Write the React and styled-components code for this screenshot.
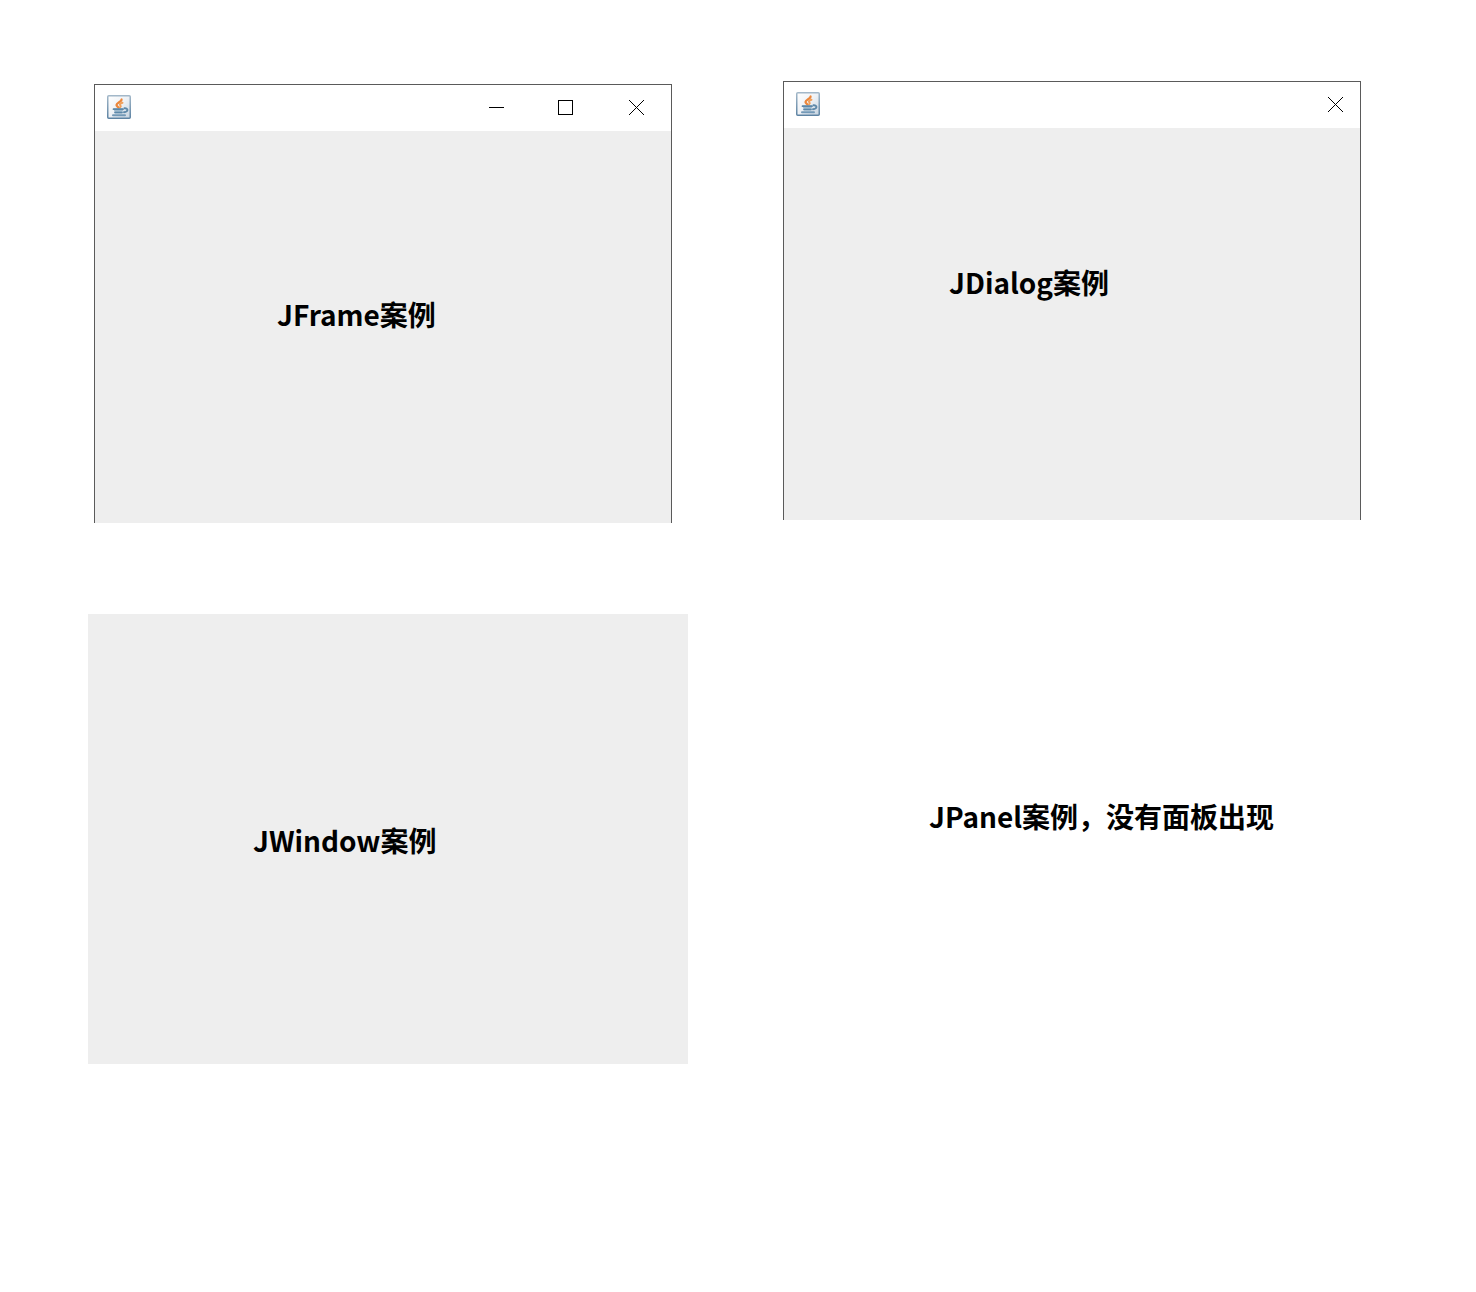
import React from "react";
import styled, { createGlobalStyle } from "styled-components";

const GlobalStyle = createGlobalStyle`
  * {
    box-sizing: border-box;
  }
  body {
    margin: 0;
    background: #ffffff;
    color: #000000;
    font-family: "Noto Sans CJK SC", sans-serif;
  }
`;

const Desktop = styled.main`
  display: grid;
  grid-template-columns: minmax(0, 600fr) minmax(0, 578fr);
  column-gap: 95px;
  row-gap: 91px;
  align-items: start;
  padding: 81px 115px 80px 88px;
`;

const Framed = styled.section`
  border: 1px solid #5a5a5a;
  border-bottom: 0;
  margin: ${(p) => p.$margin || "0"};
`;

const TitleBar = styled.header`
  display: flex;
  align-items: center;
  justify-content: space-between;
  height: 46px;
  padding-left: 12px;
  background: #ffffff;
`;

const Controls = styled.div`
  display: flex;
  height: 100%;
`;

const ControlButton = styled.button`
  display: flex;
  align-items: center;
  justify-content: center;
  width: ${(p) => p.$width}px;
  height: 100%;
  padding: 0;
  border: 0;
  background: transparent;
  color: #000000;
`;

const Glyph = styled.svg`
  display: block;
  flex: none;
`;

const Surface = styled.div`
  min-height: ${(p) => p.$height}px;
  padding: ${(p) => p.$top}px 0 0 ${(p) => p.$left}px;
  background: ${(p) => (p.$bare ? "transparent" : "#eeeeee")};
`;

const Label = styled.p`
  margin: 0;
  font-size: 28px;
  line-height: 40px;
  font-weight: 700;
  white-space: nowrap;
`;

function JavaIcon() {
  return (
    <Glyph width="24" height="26" viewBox="0 0 24 26" aria-hidden="true">
      <defs>
        <linearGradient id="tile" x1="0" y1="0" x2="1" y2="1">
          <stop offset="0" stopColor="#ffffff" />
          <stop offset="0.5" stopColor="#eef1f5" />
          <stop offset="1" stopColor="#c3d1de" />
        </linearGradient>
        <linearGradient id="edge" x1="0" y1="0" x2="0" y2="1">
          <stop offset="0" stopColor="#a3b8c9" />
          <stop offset="1" stopColor="#5d83a3" />
        </linearGradient>
      </defs>
      <rect x="0.75" y="0.75" width="22.5" height="22.5" rx="1" fill="url(#tile)" stroke="url(#edge)" strokeWidth="1.5" />
      <path d="M6.5 13.5h10l-1.500 5H8z" fill="#9cb8cd" />
      <g fill="none" strokeLinecap="round">
        <path d="M14.500 4.500c.5 2.200-5 3.200-5 5.500 0 1 1.300 1.700 2 2.500" stroke="#ec873c" strokeWidth="2.300" />
        <path d="M15.500 7.800c-3 .8-3 1.700-2 2.700.7.800.2 1.300-.6 2" stroke="#f0a05c" strokeWidth="2" />
        <path d="M6.500 14.200h9.500M8 17.500h7" stroke="#5d88a9" strokeWidth="1.700" />
        <path d="M17.500 13.300c4-.3 4 3.400-.5 3.900" stroke="#5d88a9" strokeWidth="1.900" />
        <path d="M6 20.300h12" stroke="#7399b7" strokeWidth="2" />
      </g>
    </Glyph>
  );
}

function MinimizeButton() {
  return (
    <ControlButton type="button" $width={70} aria-label="Minimize">
      <Glyph width="16" height="16" viewBox="0 0 16 16" aria-hidden="true">
        <path d="M1 7.500h15" stroke="currentColor" />
      </Glyph>
    </ControlButton>
  );
}

function MaximizeButton() {
  return (
    <ControlButton type="button" $width={70} aria-label="Maximize">
      <Glyph width="16" height="16" viewBox="0 0 16 16" aria-hidden="true">
        <rect x="0.5" y="0.5" width="14" height="14" fill="none" stroke="currentColor" />
      </Glyph>
    </ControlButton>
  );
}

function CloseButton({ width }) {
  return (
    <ControlButton type="button" $width={width} aria-label="Close">
      <Glyph width="16" height="16" viewBox="0 0 16 16" aria-hidden="true">
        <path d="M1 0l15 15M16 0L1 15" stroke="currentColor" />
      </Glyph>
    </ControlButton>
  );
}

export default function App() {
  return (
    <>
      <GlobalStyle />
      <Desktop>
        <Framed $margin="3px 16px 0 6px">
          <TitleBar>
            <JavaIcon />
            <Controls>
              <MinimizeButton />
              <MaximizeButton />
              <CloseButton width={70} />
            </Controls>
          </TitleBar>
          <Surface $height={392} $top={163} $left={182}>
            <Label>JFrame案例</Label>
          </Surface>
        </Framed>

        <Framed>
          <TitleBar>
            <JavaIcon />
            <Controls>
              <CloseButton width={50} />
            </Controls>
          </TitleBar>
          <Surface $height={392} $top={134} $left={165}>
            <Label>JDialog案例</Label>
          </Surface>
        </Framed>

        <Surface as="section" $height={450} $top={206} $left={165}>
          <Label>JWindow案例</Label>
        </Surface>

        <Surface as="section" $bare $height={450} $top={182} $left={146}>
          <Label>JPanel案例，没有面板出现</Label>
        </Surface>
      </Desktop>
    </>
  );
}
